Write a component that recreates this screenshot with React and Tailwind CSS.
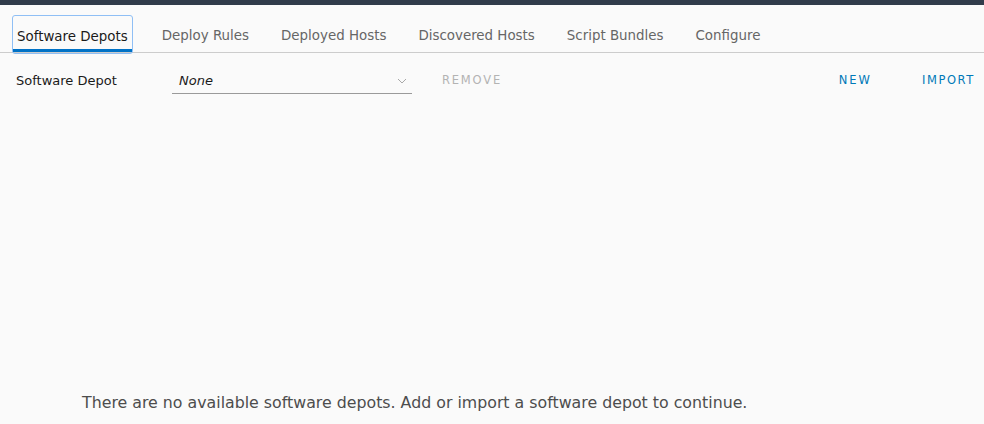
import React from "react";

const tabs = ["Software Depots", "Deploy Rules", "Deployed Hosts", "Discovered Hosts", "Script Bundles", "Configure"];

export default function App() {
  return (
    <div className="w-[984px] h-[424px] bg-[#fafafa] flex flex-col font-['DejaVu_Sans',Verdana,sans-serif] overflow-hidden">
      <div className="h-[5px] bg-[#313c4b]" />

      {/* tabs */}
      <div className="flex items-end h-[48px] border-b border-[#cccccc] pl-[12px]">
        {tabs.map((t, i) =>
          i === 0 ? (
            <div
              key={t}
              className="relative -mb-[2px] h-[39px] px-[4px] pt-[5px] flex items-center rounded-[3px] border-[1.5px] border-[#8fbff5] text-[13.4px] text-[#1a1a1a] mr-[25px]"
            >
              <span>{t}</span>
              <div className="absolute left-0 right-0 bottom-[1px] h-[3px] bg-[#0072c6]" />
            </div>
          ) : (
            <div key={t} className="h-[38px] pt-[6px] flex items-center px-[4px] mr-[24px] text-[13.4px] text-[#666666]">
              <span>{t}</span>
            </div>
          )
        )}
      </div>

      {/* toolbar */}
      <div className="flex items-center h-[30px] mt-[13px] pl-[16px] pr-[9px]">
        <div className="w-[156px] text-[13px] text-[#1a1a1a]">Software Depot</div>
        <div className="w-[240px] h-[26px] flex items-center justify-between border-b border-[#9a9a9a] pl-[7px] pr-[5px]">
          <span className="italic text-[13px] text-[#1a1a1a]">None</span>
          <svg width="10" height="6" viewBox="0 0 10 6" fill="none" stroke="#a8a8a8" strokeWidth="1">
            <path d="M1 1l4 4 4-4" />
          </svg>
        </div>
        <div className="ml-[30px] text-[11.5px] tracking-[1.8px] text-[#b3b3b3]">REMOVE</div>
        <div className="ml-auto text-[11.5px] tracking-[2px] text-[#0079b8]">NEW</div>
        <div className="ml-[50px] text-[11.5px] tracking-[1.6px] text-[#0079b8]">IMPORT</div>
      </div>

      <div className="flex-1 flex flex-col justify-end pb-[9px] pl-[82px]">
        <p className="text-[15.8px] text-[#4d4d4d]">
          There are no available software depots. Add or import a software depot to continue.
        </p>
      </div>
    </div>
  );
}
